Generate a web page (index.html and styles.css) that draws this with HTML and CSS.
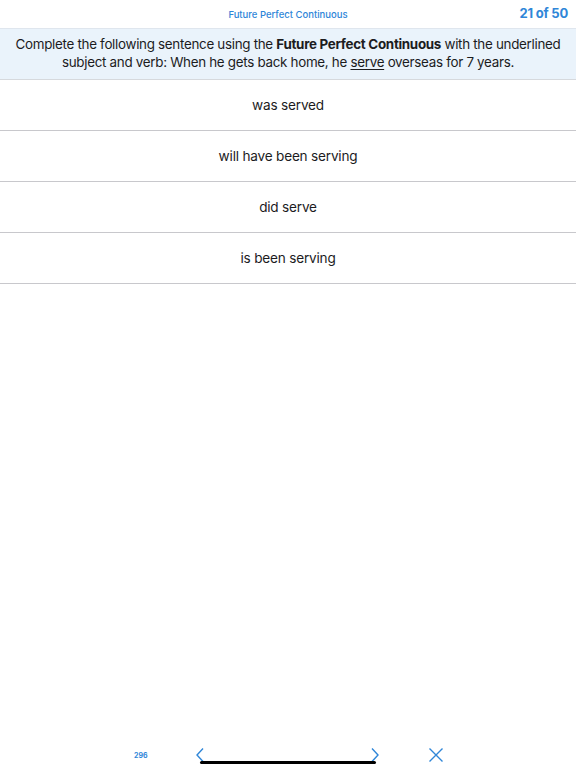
FILE: index.html
```html
<!DOCTYPE html>
<html lang="en">
<head>
    <meta charset="UTF-8">
    <meta name="viewport" content="width=device-width, initial-scale=1.0">
    <title>Future Perfect Continuous</title>
    <link rel="stylesheet" href="styles.css">
</head>
<body>
    <div class="screen">
        <!-- Üst başlık -->
        <div class="topbar">
            <span class="topbar-title">Future Perfect Continuous</span>
            <span class="topbar-count">21 of 50</span>
        </div>

        <!-- Soru -->
        <div class="question">
            Complete the following sentence using the <strong>Future Perfect Continuous</strong> with the underlined subject and verb: When he gets back home, he <u>serve</u> overseas for 7 years.
        </div>

        <!-- Cevaplar -->
        <div class="answers">
            <div class="answer">was served</div>
            <div class="answer">will have been serving</div>
            <div class="answer">did serve</div>
            <div class="answer">is been serving</div>
        </div>

        <div class="spacer"></div>

        <!-- Alt araç çubuğu -->
        <div class="toolbar">
            <span class="score">296</span>
            <svg class="chevron" width="10" height="16" viewBox="0 0 10 16">
                <path d="M8 1.5 L2 8 L8 14.5" fill="none" stroke="#2f86d8" stroke-width="1.4"/>
            </svg>
            <div class="toolbar-gap"></div>
            <svg class="chevron" width="10" height="16" viewBox="0 0 10 16">
                <path d="M2 1.5 L8 8 L2 14.5" fill="none" stroke="#2f86d8" stroke-width="1.4"/>
            </svg>
            <svg class="close" width="16" height="16" viewBox="0 0 16 16">
                <path d="M1.5 1.5 L14.5 14.5 M14.5 1.5 L1.5 14.5" fill="none" stroke="#2f86d8" stroke-width="1.4"/>
            </svg>
            <div class="home-indicator"></div>
        </div>
    </div>
</body>
</html>
```

FILE: styles.css
```css
/* Genel stil */
body {
    margin: 0;
    padding: 0;
    background-color: #ffffff;
    font-family: 'Inter', 'Liberation Sans', sans-serif;
    color: #1c1c1e;
}

.screen {
    display: flex;
    flex-direction: column;
    height: 768px;
}

/* Üst başlık */
.topbar {
    height: 28px;
    display: flex;
    align-items: center;
    justify-content: center;
    position: relative;
}

.topbar-title {
    font-size: 9.5px;
    font-weight: 500;
    color: #2f86d8;
}

.topbar-count {
    position: absolute;
    right: 8px;
    top: 5px;
    font-size: 13px;
    font-weight: 700;
    color: #2f86d8;
    letter-spacing: -0.2px;
}

/* Soru */
.question {
    background-color: #eaf3fb;
    border-top: 1px solid #dfe6ee;
    border-bottom: 1px solid #d6d9dd;
    padding: 6px 10px 8px;
    font-size: 13.4px;
    line-height: 18px;
    text-align: center;
    letter-spacing: -0.3px;
}

.question strong {
    font-weight: 700;
}

.question u {
    text-underline-offset: 2px;
}

/* Cevaplar */
.answer {
    height: 50px;
    display: flex;
    align-items: center;
    justify-content: center;
    border-bottom: 1px solid #c8c8cc;
    font-size: 13.6px;
    letter-spacing: -0.2px;
}

.spacer {
    flex: 1;
}

/* Alt araç çubuğu */
.toolbar {
    height: 26px;
    display: flex;
    align-items: center;
    position: relative;
}

.score {
    width: 14px;
    margin-left: 134px;
    font-size: 7px;
    font-weight: 700;
    color: #2f86d8;
}

.chevron:first-of-type {
    margin-left: 47px;
}

.toolbar-gap {
    width: 165px;
}

.close {
    margin-left: 48px;
}

.home-indicator {
    position: absolute;
    left: 200px;
    width: 176px;
    bottom: 4px;
    height: 3px;
    border-radius: 2px;
    background-color: #000000;
}
```
